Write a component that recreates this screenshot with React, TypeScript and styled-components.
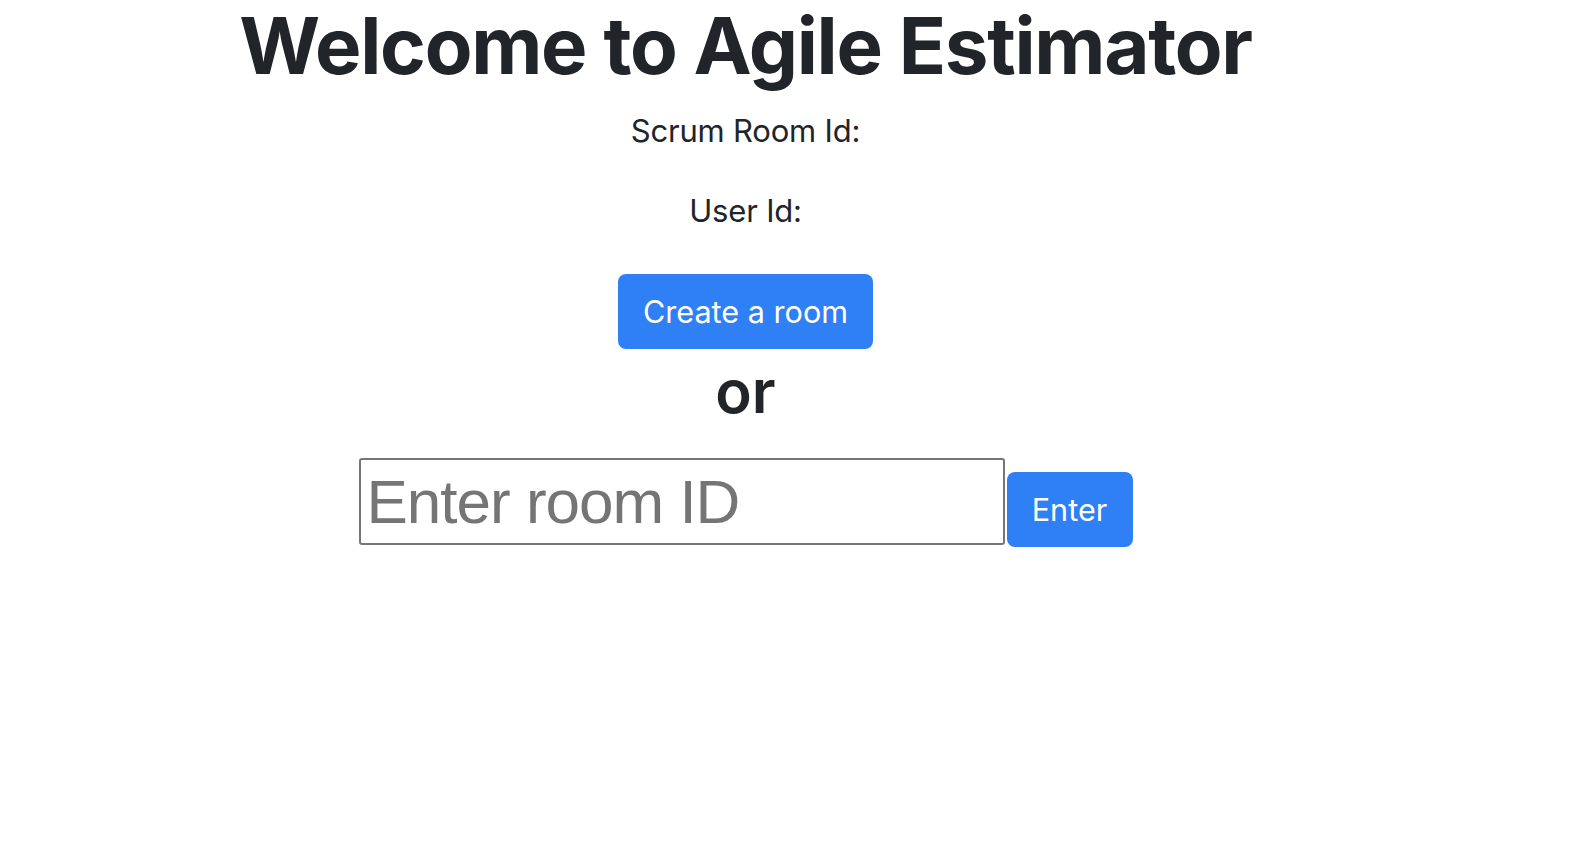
import styled, { createGlobalStyle } from 'styled-components';

const GlobalStyle = createGlobalStyle`
  body {
    margin: 0;
    background: #fff;
    color: #212529;
    font-family: Inter, "Noto Sans", sans-serif;
  }
`;

const Page = styled.main`
  width: 1491px;
  display: flex;
  flex-direction: column;
  align-items: center;
`;

const Title = styled.h1`
  margin: 0;
  font-size: 78px;
  font-weight: 700;
  line-height: 92px;
  letter-spacing: -1.3px;
`;

const Label = styled.p<{ $top: number }>`
  margin: ${(p) => p.$top}px 0 0;
  font-size: 31px;
  line-height: 40px;
  letter-spacing: -0.2px;
`;

const Button = styled.button<{ $w: number }>`
  width: ${(p) => p.$w}px;
  height: 75px;
  flex-shrink: 0;
  border: none;
  border-radius: 8px;
  background: #2f7ff5;
  color: #fff;
  font-family: Inter, "Noto Sans", sans-serif;
  font-size: 30.6px;
  cursor: pointer;
`;

const CreateButton = styled(Button)`
  margin-top: 43px;
`;

const EnterButton = styled(Button)`
  margin-top: 14px;
`;

const Or = styled.h2`
  margin: 6px 0 0;
  font-size: 60px;
  font-weight: 600;
  line-height: 72px;
`;

const JoinRow = styled.div`
  margin-top: 31px;
  display: flex;
  align-items: flex-start;
  gap: 2px;
`;

const RoomInput = styled.input`
  box-sizing: border-box;
  width: 646px;
  height: 87px;
  padding: 0 6px;
  border: 2px solid #767676;
  border-radius: 3px;
  font-family: "Liberation Sans", Arial, sans-serif;
  font-size: 62px;
  letter-spacing: -1px;
  color: #212529;
  &::placeholder {
    color: #757575;
  }
`;

export default function App() {
  return (
    <>
      <GlobalStyle />
      <Page>
        <Title>Welcome to Agile Estimator</Title>
        <Label $top={19}>Scrum Room Id:</Label>
        <Label $top={40}>User Id:</Label>
        <CreateButton $w={255}>Create a room</CreateButton>
        <Or>or</Or>
        <JoinRow>
          <RoomInput placeholder="Enter room ID" />
          <EnterButton $w={126}>Enter</EnterButton>
        </JoinRow>
      </Page>
    </>
  );
}
